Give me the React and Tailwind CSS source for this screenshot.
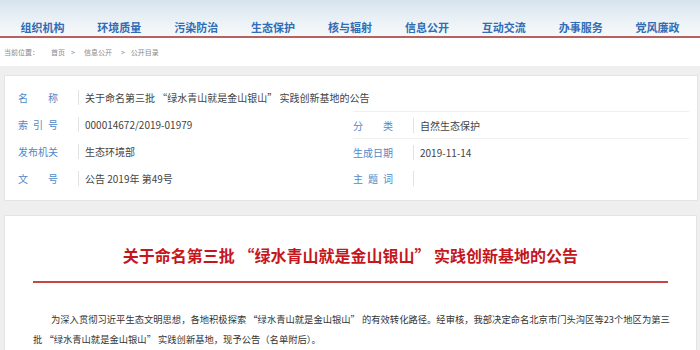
import React from "react";

const navItems = ["组织机构", "环境质量", "污染防治", "生态保护", "核与辐射", "信息公开", "互动交流", "办事服务", "党风廉政"];

function Label({ chars }) {
  return (
    <div className="w-[40px] flex justify-between text-[10px] text-[#5089c8]">
      {chars.map((c, i) => (
        <span key={i}>{c}</span>
      ))}
    </div>
  );
}

function Cell({ chars, value, border }) {
  return (
    <div className={`h-[27px] flex items-center ${border ? "border-t border-[#f0f0f0]" : ""}`}>
      <Label chars={chars} />
      <div className="w-[20px]" />
      <div className="w-px h-[15px] bg-[#e2e2e2]" />
      <div className="pl-[6px] text-[10px] text-[#444] whitespace-nowrap">{value}</div>
    </div>
  );
}

export default function App() {
  return (
    <div className="w-[700px] h-[350px] overflow-hidden bg-white font-['Noto_Sans_CJK_SC','Liberation_Sans',sans-serif]">
      <div className="h-[38px] bg-gradient-to-b from-[#d6e3ed] via-[#e9f0f5] to-[#f7f9fb] border-b-2 border-[#b8625f] flex items-start pt-[19px] px-[4px]">
        {navItems.map((n) => (
          <div key={n} className="flex-1 text-center text-[11px] leading-[16px] font-bold text-[#2f6db6]">
            {n}
          </div>
        ))}
      </div>
      <div className="h-[28px] flex items-center pl-[4px] text-[7px] text-[#8a8a8a]">
        <span>当前位置：</span>
        <span className="ml-[12px]">首页</span>
        <span className="ml-[6px]">&gt;</span>
        <span className="ml-[9px]">信息公开</span>
        <span className="ml-[9px]">&gt;</span>
        <span className="ml-[6px]">公开目录</span>
      </div>
      <div className="bg-[#efefef] pt-[9px] pb-[20px]">
        <div className="ml-[4px] mr-[2px] bg-white border border-[#e4e4e4] py-[8px]">
          <div className="pl-[13px]">
            <Cell chars={["名", "称"]} value="关于命名第三批 “绿水青山就是金山银山” 实践创新基地的公告" />
          </div>
          <div className="grid grid-cols-[335px_1fr]">
            <div className="pl-[13px]">
              <Cell chars={["索", "引", "号"]} value="000014672/2019-01979" />
              <Cell chars={["发", "布", "机", "关"]} value="生态环境部" />
              <Cell chars={["文", "号"]} value="公告 2019年 第49号" />
            </div>
            <div className="pl-[13px] mr-[8px]">
              <Cell chars={["分", "类"]} value="自然生态保护" border />
              <Cell chars={["生", "成", "日", "期"]} value="2019-11-14" border />
              <Cell chars={["主", "题", "词"]} value="" />
            </div>
          </div>
        </div>
        <div className="ml-[4px] mr-[3px] mt-[14px] bg-white border border-[#e4e4e4] h-[200px]">
          <div className="pt-[27px] text-center text-[16px] leading-[24px] font-bold text-[#c5161d]">
            关于命名第三批 “绿水青山就是金山银山” 实践创新基地的公告
          </div>
          <div className="mx-[28px] mt-[14px] h-[2px] bg-[#c74545]" />
          <div className="mx-[28px] mt-[26px] text-[9.3px] leading-[20px] text-[#333] whitespace-nowrap">
            <p className="pl-[18px]">
              为深入贯彻习近平生态文明思想，各地积极探索 “绿水青山就是金山银山” 的有效转化路径。经审核，我部决定命名北京市门头沟区等23个地区为第三
            </p>
            <p>批 “绿水青山就是金山银山” 实践创新基地，现予公告（名单附后）。</p>
          </div>
        </div>
      </div>
    </div>
  );
}
